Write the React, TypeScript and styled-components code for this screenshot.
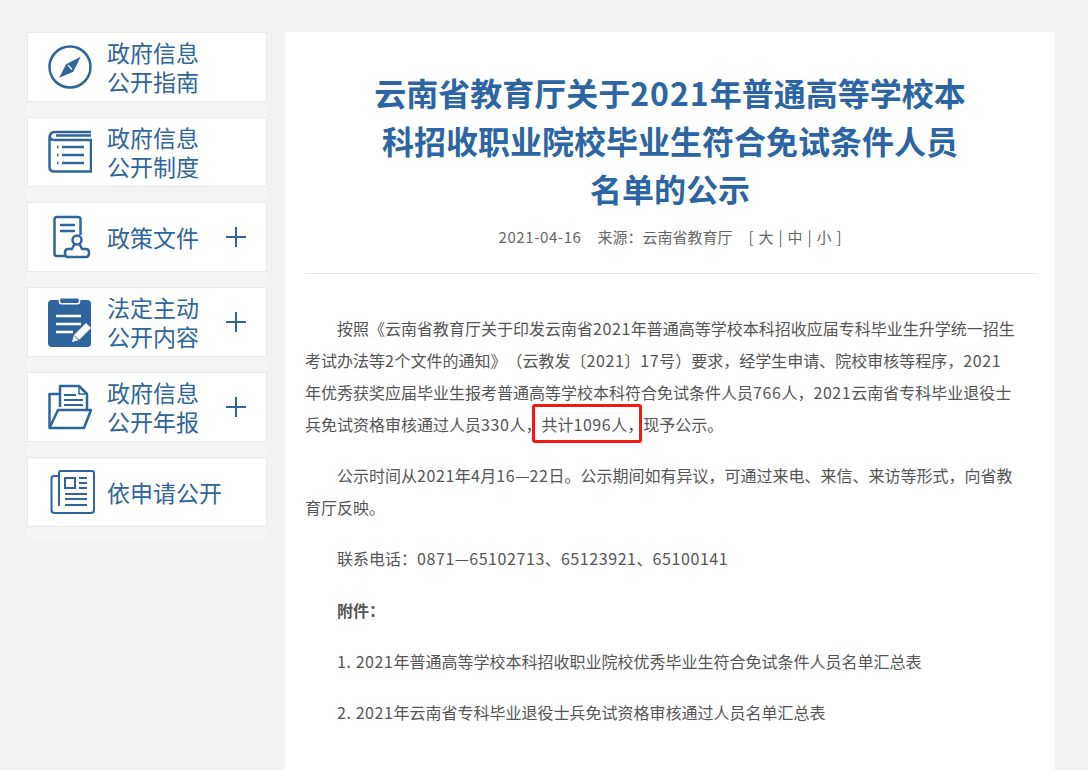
import { FC, ReactNode } from "react";
import styled, { createGlobalStyle } from "styled-components";

const GlobalStyle = createGlobalStyle`
  html, body {
    margin: 0;
    padding: 0;
    height: 770px;
    overflow: hidden;
    background: #f2f2f2;
    font-family: "Noto Sans CJK SC", "Noto Sans", sans-serif;
    text-spacing-trim: space-all;
  }
`;

const Page = styled.div`
  display: flex;
  align-items: flex-start;
  gap: 18px;
  padding: 32px 0 0 27px;
  height: 738px;
  overflow: hidden;
`;

const Sidebar = styled.nav`
  width: 240px;
  flex: none;
  display: flex;
  flex-direction: column;
  gap: 15px;
  padding-bottom: 15px;
  background: #f4f4f4;
`;

const MenuItem = styled.div`
  height: 70px;
  box-sizing: border-box;
  background: #fff;
  border: 1px solid #e8e8e8;
  display: flex;
  align-items: center;
  color: #2d659c;
`;

const IconSlot = styled.div`
  width: 79px;
  flex: none;
  display: flex;
  padding-left: 20px;
  box-sizing: border-box;
`;

const MenuLabel = styled.div`
  flex: 1;
  font-size: 23px;
  line-height: 29px;
  white-space: nowrap;
`;

const Plus = styled.span`
  width: 20px;
  height: 20px;
  margin-right: 20px;
  position: relative;
  flex: none;

  &::before, &::after {
    content: "";
    position: absolute;
    background: #2d659c;
  }
  &::before { left: 0; right: 0; top: 9px; height: 2px; }
  &::after { top: 0; bottom: 0; left: 9px; width: 2px; }
`;

const Article = styled.main`
  width: 770px;
  flex: none;
  box-sizing: border-box;
  min-height: 738px;
  padding: 0 20px;
  background: #fff;
`;

const Title = styled.h1`
  width: 600px;
  margin: 0 auto;
  padding-top: 36px;
  font-size: 32px;
  line-height: 48px;
  font-weight: 700;
  text-align: center;
  color: #2b65a3;
`;

const TitleNumber = styled.span`
  letter-spacing: 1px;
`;

const Meta = styled.div`
  margin-top: 13px;
  height: 48px;
  line-height: 24px;
  font-size: 15px;
  text-align: center;
  color: #666;
  border-bottom: 1px solid #e5e5e5;
  word-spacing: 1.6px;
`;

const MetaDate = styled.span`
  margin-right: 16px;
  letter-spacing: 0.6px;
`;

const MetaSource = styled.span`
  margin-right: 16px;
`;

const Body = styled.div`
  padding-top: 38px;
  font-size: 16px;
  color: #555;
`;

const Para = styled.p`
  margin: 0 0 19.2px;
  padding-right: 16px;
  line-height: 32px;
  text-indent: 32px;
`;

const Num = styled.span`
  letter-spacing: 0.58px;
`;

const Highlight = styled.span`
  position: relative;

  &::after {
    content: "";
    position: absolute;
    left: -9px;
    right: 1px;
    top: -8px;
    bottom: -7px;
    border: 3px solid #f01a12;
    border-radius: 3px;
  }
`;

const icons: Record<string, ReactNode> = {
  compass: (
    <svg width="44" height="44" viewBox="0 0 44 44" fill="none" stroke="#2d659c" strokeWidth="2.5">
      <circle cx="22" cy="22" r="20.5" />
      <path d="M32.700 11.700 L25.300 26.700 L11.300 32.700 L18 19.300 Z" fill="#2d659c" stroke="none" />
      <path d="M20 20 L24 24.500" stroke="#fff" strokeWidth="1.200" />
    </svg>
  ),
  list: (
    <svg width="44" height="44" viewBox="0 0 44 44" fill="none" stroke="#2d659c" strokeWidth="2.5">
      <path d="M43 2 H7 Q1.5 2 1.5 8 V37 Q1.5 41.500 6 41.500 H43 V10 H7 Q2 10 2 7" />
      <path d="M8 5.500 H43" />
      <path d="M14 17 H36 M14 25 H36 M14 33 H36" />
      <path d="M9 17 H10.500 M9 25 H10.500 M9 33 H10.500" />
    </svg>
  ),
  policy: (
    <svg width="44" height="44" viewBox="0 0 44 44" fill="none" stroke="#2d659c" strokeWidth="2.500" strokeLinecap="round" strokeLinejoin="round">
      <path d="M16 41 H9 Q6.500 41 6.500 38.500 V4.500 Q6.500 2 9 2 H30 Q32.500 2 32.500 4.500 V19" />
      <path d="M13 10 H26 M13 16 H26" />
      <circle cx="29" cy="25" r="4.500" />
      <path d="M26 30 L24 34 H20 Q17 34 17 37.500 V38 Q17 42 20 42 H38 Q41 42 41 38 V37.500 Q41 34 38 34 H34 L32 30" />
    </svg>
  ),
  clipboard: (
    <svg width="44" height="50" viewBox="0 0 44 50">
      <rect x="0" y="3" width="43" height="47" rx="4" fill="#2d659c" />
      <rect x="11.500" y="0.800" width="20" height="6" rx="2" fill="#2d659c" stroke="#fff" strokeWidth="1.500" />
      <path d="M8 19 H33 M8 27 H33 M8 35 H25" stroke="#fff" strokeWidth="2.500" />
      <path d="M24 45 L26 38 L38 26 L43 31 L31 43 Z" fill="#fff" />
      <path d="M26.500 39 L31 43" stroke="#2d659c" strokeWidth="1" />
    </svg>
  ),
  folder: (
    <svg width="44" height="46" viewBox="0 0 44 46" fill="none" stroke="#2d659c" strokeWidth="2.500" strokeLinejoin="round">
      <path d="M12 10 H1.500 V44 L10 26 H43 L36 44 H1.500" />
      <path d="M12 23 V2 H31 L39 10 V25" />
      <path d="M31 2 V10 H39" strokeWidth="1.500" />
      <path d="M16 11 H28 M16 16 H35 M16 21 H35" strokeWidth="1.800" />
    </svg>
  ),
  paper: (
    <svg width="47" height="44" viewBox="-2 0 47 44" fill="none" stroke="#2d659c" strokeWidth="2">
      <path d="M8 6 H4 Q1.500 6 1.500 8.500 V40 Q1.500 43 4.500 43 H41 Q44 43 44 40 V3 Q44 1 42 1 H11 Q9 1 9 3 V36" />
      <rect x="15" y="8" width="10" height="10" />
      <path d="M29 8 H37 M29 13 H37 M29 18 H37 M15 24 H37 M15 29 H37 M15 35 H37" />
    </svg>
  ),
};

const menu = [
  { icon: "compass", label: ["政府信息", "公开指南"] },
  { icon: "list", label: ["政府信息", "公开制度"] },
  { icon: "policy", label: ["政策文件"], expandable: true },
  { icon: "clipboard", label: ["法定主动", "公开内容"], expandable: true },
  { icon: "folder", label: ["政府信息", "公开年报"], expandable: true },
  { icon: "paper", label: ["依申请公开"] },
];

const SideMenu: FC = () => (
  <Sidebar>
    {menu.map(item => (
      <MenuItem key={item.icon}>
        <IconSlot>{icons[item.icon]}</IconSlot>
        <MenuLabel>
          {item.label.map(line => <div key={line}>{line}</div>)}
        </MenuLabel>
        {item.expandable && <Plus />}
      </MenuItem>
    ))}
  </Sidebar>
);

export default function App() {
  return (
    <>
      <GlobalStyle />
      <Page>
        <SideMenu />
        <Article>
          <Title>云南省教育厅关于<TitleNumber>2021</TitleNumber>年普通高等学校本科招收职业院校毕业生符合免试条件人员名单的公示</Title>
          <Meta>
            <MetaDate>2021-04-16</MetaDate>
            <MetaSource>来源：云南省教育厅</MetaSource>
            [ 大 | 中 | 小 ]
          </Meta>
          <Body>
            <Para>
              按照《云南省教育厅关于印发云南省<Num>2021</Num>年普通高等学校本科招收应届专科毕业生升学统一招生考试办法等<Num>2</Num>个文件的通知》（云教发〔<Num>2021</Num>〕<Num>17</Num>号）要求，经学生申请、院校审核等程序，<Num>2021</Num><br />年优秀获奖应届毕业生报考普通高等学校本科符合免试条件人员<Num>766</Num>人，<Num>2021</Num>云南省专科毕业退役士兵免试资格审核通过人员<Num>330</Num>人，<Highlight>共计<Num>1096</Num>人，</Highlight>现予公示。
            </Para>
            <Para>公示时间从<Num>2021</Num>年<Num>4</Num>月<Num>16</Num>—<Num>22</Num>日。公示期间如有异议，可通过来电、来信、来访等形式，向省教育厅反映。</Para>
            <Para>联系电话：<Num>0871</Num>—<Num>65102713</Num>、<Num>65123921</Num>、<Num>65100141</Num></Para>
            <Para><strong>附件：</strong></Para>
            <Para><Num>1. 2021</Num>年普通高等学校本科招收职业院校优秀毕业生符合免试条件人员名单汇总表</Para>
            <Para><Num>2. 2021</Num>年云南省专科毕业退役士兵免试资格审核通过人员名单汇总表</Para>
          </Body>
        </Article>
      </Page>
    </>
  );
}
